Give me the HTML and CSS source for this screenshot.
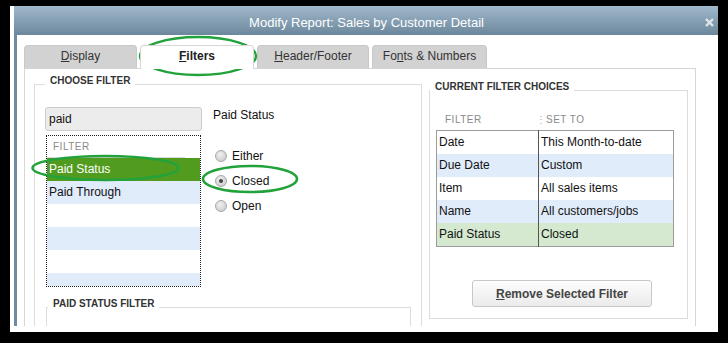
FILE: index.html
```html
<!DOCTYPE html>
<html lang="en">
<head>
    <meta charset="UTF-8">
    <title>Modify Report: Sales by Customer Detail</title>
    <link rel="stylesheet" href="styles.css">
</head>
<body>
    <div class="window">
        <div class="titlebar">
            <span class="title">Modify Report: Sales by Customer Detail</span>
            <svg class="close" width="9" height="9" viewBox="0 0 9 9"><path d="M1 1 L8 8 M8 1 L1 8" stroke="#dfe5ea" stroke-width="2.4"/></svg>
        </div>
        <div class="body">
            <div class="tabs">
                <div class="tab tab-display"><u>D</u>isplay</div>
                <div class="tab tab-filters active"><u>F</u>ilters</div>
                <div class="tab tab-header"><u>H</u>eader/Footer</div>
                <div class="tab tab-fonts">Fo<u>n</u>ts &amp; Numbers</div>
            </div>
            <div class="panel">
                <div class="group choose">
                    <div class="group-title">CHOOSE FILTER</div>
                    <div class="choose-row">
                        <div class="filter-col">
                            <div class="search">paid</div>
                            <div class="list">
                                <div class="list-head">FILTER</div>
                                <div class="list-row selected">Paid Status</div>
                                <div class="list-row alt">Paid Through</div>
                                <div class="list-row"></div>
                                <div class="list-row alt"></div>
                                <div class="list-row"></div>
                                <div class="list-row alt"></div>
                            </div>
                        </div>
                        <div class="status-col">
                            <div class="status-label">Paid Status</div>
                            <div class="radio"><span class="dot"></span>Either</div>
                            <div class="radio"><span class="dot checked"></span>Closed</div>
                            <div class="radio"><span class="dot"></span>Open</div>
                        </div>
                    </div>
                    <div class="group sub">
                        <div class="group-title">PAID STATUS FILTER</div>
                    </div>
                </div>
                <div class="group current">
                    <div class="group-title">CURRENT FILTER CHOICES</div>
                    <div class="choices-head">
                        <span class="head-filter">FILTER</span>
                        <span class="head-sep">&#8942;</span>
                        <span>SET TO</span>
                    </div>
                    <table class="choices">
                        <tr><td>Date</td><td>This Month-to-date</td></tr>
                        <tr class="alt"><td>Due Date</td><td>Custom</td></tr>
                        <tr><td>Item</td><td>All sales items</td></tr>
                        <tr class="alt"><td>Name</td><td>All customers/jobs</td></tr>
                        <tr class="picked"><td>Paid Status</td><td>Closed</td></tr>
                    </table>
                    <button class="remove"><u>R</u>emove Selected Filter</button>
                </div>
            </div>
        </div>
    </div>

    <svg class="marks" width="728" height="343" viewBox="0 0 728 343">
        <ellipse cx="198" cy="56" rx="58" ry="19" />
        <ellipse cx="105.5" cy="168" rx="73" ry="12" />
        <ellipse cx="250" cy="179" rx="47" ry="13" />
    </svg>
</body>
</html>
```

FILE: styles.css
```css
body {
    margin: 0;
    background: #000;
    font-family: 'Liberation Sans', Arial, sans-serif;
    font-size: 12px;
    color: #111;
    width: 728px;
    height: 343px;
    overflow: hidden;
    position: relative;
}
.window {
    margin: 6px 0 0 10px;
    width: 708px;
    background: #fff;
    padding: 0 0 6px 4px;
    box-sizing: border-box;
}
.titlebar {
    height: 29px;
    box-sizing: border-box;
    padding: 9px 4px 0 0;
    background: linear-gradient(#a0b8cb, #6c879c);
    display: flex;
    align-items: flex-start;
}
.title {
    flex: 1;
    text-align: center;
    color: #fff;
    font-size: 13px;
    line-height: 16px;
    padding-left: 14px;
}
.close {
    margin-top: 3px;
}
.body {
    height: 291px;
    overflow: hidden;
    border-left: 3px solid #6f8aa1;
    padding: 10px 0 0 7px;
    box-sizing: border-box;
}
.tabs {
    display: flex;
    gap: 3px;
    height: 23px;
}
.tab {
    height: 23px;
    box-sizing: border-box;
    background: #d2d2d2;
    border: 1px solid #c8c8c8;
    border-bottom: none;
    border-radius: 4px 4px 0 0;
    text-align: center;
    line-height: 21px;
    color: #333;
}
.tab-display { width: 113px; }
.tab-filters { width: 114px; }
.tab-header { width: 112px; }
.tab-fonts { width: 115px; }
.tab.active {
    background: #fff;
    border-color: #d6d6d6;
    font-weight: bold;
    color: #222;
    height: 24px;
    position: relative;
    z-index: 1;
}
.panel {
    width: 672px;
    height: 300px;
    box-sizing: border-box;
    border: 1px solid #d6d6d6;
    padding: 15px 0 0 9px;
    display: flex;
    align-items: flex-start;
}
.group {
    border: 1px solid #dcdcdc;
    box-sizing: border-box;
}
.group-title {
    margin-top: -10px;
    height: 12px;
    line-height: 12px;
    font-size: 10px;
    font-weight: bold;
    color: #333;
    background: #fff;
    padding: 0 5px;
    width: fit-content;
}
.choose {
    width: 388px;
    height: 300px;
    padding-left: 10px;
}
.choose-row {
    display: flex;
    margin-top: 20px;
}
.filter-col {
    width: 157px;
}
.search {
    height: 24px;
    box-sizing: border-box;
    background: #ececec;
    border: 1px solid #cdcdcd;
    border-radius: 3px;
    padding-left: 3px;
    line-height: 22px;
}
.list {
    margin: 4px 0 0 1px;
    width: 155px;
    height: 152px;
    box-sizing: border-box;
    border: 1px dotted #222;
    overflow: hidden;
}
.list-head {
    height: 22px;
    line-height: 22px;
    font-size: 10px;
    color: #8a8a8a;
    letter-spacing: 0.5px;
    padding-left: 6px;
    box-sizing: border-box;
    border-bottom: 1px solid #d8d8d8;
    margin-right: 15px;
}
.list-row {
    height: 23px;
    line-height: 23px;
    padding-left: 2px;
}
.list-row.alt {
    background: #e1ecfb;
}
.list-row.selected {
    background: #519b1e;
    color: #fff;
}
.status-col {
    margin-left: 11px;
}
.status-label {
    line-height: 16px;
    margin-bottom: 20px;
}
.radio {
    height: 25px;
    display: flex;
    align-items: center;
    gap: 5px;
}
.dot {
    width: 12px;
    height: 12px;
    box-sizing: border-box;
    border-radius: 50%;
    border: 1px solid #a8a8a8;
    background: radial-gradient(circle at 40% 35%, #f0f0f0, #c4c4c4);
    margin-left: 2px;
    display: flex;
    align-items: center;
    justify-content: center;
}
.dot.checked::after {
    content: "";
    width: 4px;
    height: 4px;
    border-radius: 50%;
    background: #444;
}
.sub {
    margin: 20px 0 0 1px;
    width: 365px;
    height: 40px;
    padding-left: 1px;
}
.current {
    margin: 6px 0 0 7px;
    width: 259px;
    height: 229px;
}
.choices-head {
    margin-top: 20px;
    height: 14px;
    line-height: 14px;
    font-size: 10px;
    color: #8a8a8a;
    letter-spacing: 0.5px;
    padding-left: 15px;
    display: flex;
}
.head-filter {
    width: 91px;
}
.head-sep {
    width: 10px;
    letter-spacing: 0;
    color: #aaa;
}
.choices {
    margin: 3px 0 0 6px;
    width: 238px;
    border-collapse: collapse;
    border: 1px solid #9c9c9c;
}
.choices td {
    height: 23px;
    padding: 0 0 0 2px;
    line-height: 23px;
}
.choices td:first-child {
    width: 99px;
    border-right: 1px solid #555;
}
.choices tr.alt {
    background: #e1ecfb;
}
.choices tr.picked {
    background: #d4e9d0;
}
.remove {
    display: block;
    margin: 33px 0 0 42px;
    width: 180px;
    height: 27px;
    background: linear-gradient(#fdfdfd, #ebebeb);
    border: 1px solid #c8c8c8;
    border-radius: 3px;
    font-family: 'Liberation Sans', Arial, sans-serif;
    font-size: 12px;
    font-weight: bold;
    color: #444;
    padding: 0;
}
.marks {
    position: absolute;
    left: 0;
    top: 0;
    pointer-events: none;
}
.marks ellipse {
    fill: none;
    stroke: #22a23b;
    stroke-width: 2.5;
}
```
